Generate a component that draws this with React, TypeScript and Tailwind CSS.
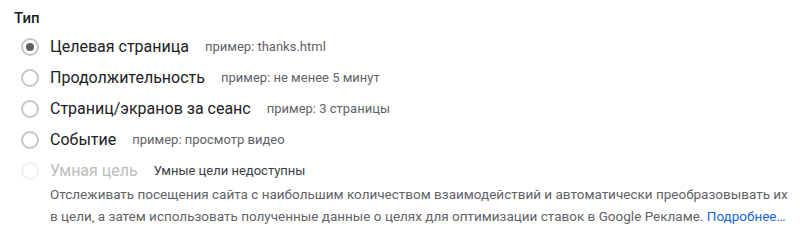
import React from 'react';

const options = [
  { label: 'Целевая страница', hint: 'пример: thanks.html', checked: true },
  { label: 'Продолжительность', hint: 'пример: не менее 5 минут' },
  { label: 'Страниц/экранов за сеанс', hint: 'пример: 3 страницы' },
  { label: 'Событие', hint: 'пример: просмотр видео' },
];

function Radio({ checked, disabled }: { checked?: boolean; disabled?: boolean }) {
  return (
    <span
      className={`flex h-[18px] w-[18px] shrink-0 items-center justify-center rounded-full border-2 ${
        disabled ? 'border-[#f0f0f0]' : 'border-[#c6c6c6]'
      }`}
    >
      {checked && <span className="h-[8px] w-[8px] rounded-full bg-[#5f5f5f]" />}
    </span>
  );
}

export default function App() {
  return (
    <div className="h-[232px] w-[800px] bg-white pl-[14px] pt-[8px] font-['Roboto',sans-serif]">
      <div className="text-[15px] font-medium leading-[20px] text-[#202124]">Тип</div>
      <div className="mt-[3px] flex flex-col">
        {options.map(o => (
          <div key={o.label} className="flex h-[31px] items-center">
            <span className="ml-[7px] mr-[11px]">
              <Radio checked={o.checked} />
            </span>
            <span className="text-[16px] text-[#202124]">{o.label}</span>
            <span className="ml-[16px] text-[13px] text-[#5f6368]">{o.hint}</span>
          </div>
        ))}
        <div className="flex h-[31px] items-center">
          <span className="ml-[7px] mr-[11px]">
            <Radio disabled />
          </span>
          <span className="text-[16px] text-[#bdbdbd]">Умная цель</span>
          <span className="ml-[16px] text-[13px] text-[#3c4043]">Умные цели недоступны</span>
        </div>
      </div>
      <p className="ml-[36px] mt-[-3px] w-[745px] whitespace-nowrap text-[13.5px] leading-[22px] text-[#5f6368]">
        Отслеживать посещения сайта с наибольшим количеством взаимодействий и автоматически преобразовывать их
        <br />
        в цели, а затем использовать полученные данные о целях для оптимизации ставок в Google Рекламе.{' '}
        <a className="text-[#1967d2]">Подробнее…</a>
      </p>
    </div>
  );
}
